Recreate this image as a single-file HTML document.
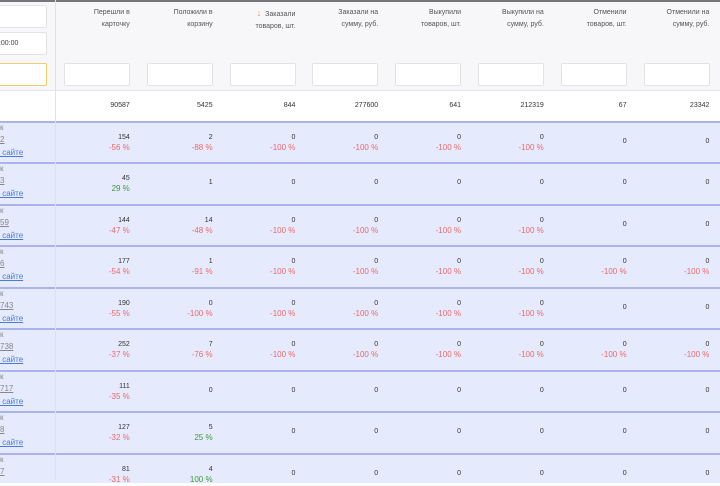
<!DOCTYPE html>
<html><head><meta charset="utf-8"><style>
*{box-sizing:border-box;margin:0;padding:0}
body{width:720px;height:480px;overflow:hidden;background:#fff;font-family:"Liberation Sans",sans-serif;font-size:7px;color:#333;position:relative}
.top{position:absolute;left:0;top:0;width:720px;height:2px;background:#777}
.head{position:absolute;left:0;top:2px;width:720px;height:88px;background:#f7f7f9}
.vd{position:absolute;left:55px;top:0;width:1px;height:480px;background:#e2e2e6}
.inp{position:absolute;background:#fff;border:1px solid #e3e3e6;border-radius:2px}
.ht{position:absolute;top:7px;text-align:right;line-height:12px;color:#555;font-size:7px;width:80px}
.tot{position:absolute;top:90px;left:0;width:720px;height:31px;background:#fff;border-top:1px solid #e6e6ea}
.row{position:absolute;left:0;width:720px;background:#e6eafd;border-top:2px solid #a9b5ea}
.c{position:absolute;text-align:right;width:80px;line-height:10px;font-size:7px;color:#333}
.r{color:#ea6a6a;font-size:8px}
.g{color:#3a9a3a;font-size:8px}
.lt{position:absolute;left:0;font-size:8px;color:#888;line-height:12px}
.lt u{color:#888}
.lk{color:#4a7ad8;text-decoration:underline}
</style></head><body>
<div class="top"></div>
<div class="head"></div>
<div class="inp" style="left:-4px;top:5px;width:51px;height:23px"></div>
<div class="inp" style="left:-4px;top:32px;width:51px;height:23px;font-size:7px;padding:7px 0 0 0;color:#444">&nbsp;:00:00</div>
<div class="inp" style="left:-4px;top:63px;width:51px;height:23px;border-color:#f0cf6a"></div>
<div class="tot"></div>
<div id="g"></div>
<div class="vd"></div>
<script>
var hdr=[["Перешли в","карточку"],["Положили в","корзину"],["Заказали","товаров, шт."],["Заказали на","сумму, руб."],["Выкупили","товаров, шт."],["Выкупили на","сумму, руб."],["Отменили","товаров, шт."],["Отменили на","сумму, руб."]];
var tot=["90587","5425","844","277600","641","212319","67","23342"];
var lbl=["2","3","59","6","743","738","717","8","7"];
var D=[
[["154","-56 %"],["2","-88 %"],["0","-100 %"],["0","-100 %"],["0","-100 %"],["0","-100 %"],["0"],["0"]],
[["45","29 %","g"],["1"],["0"],["0"],["0"],["0"],["0"],["0"]],
[["144","-47 %"],["14","-48 %"],["0","-100 %"],["0","-100 %"],["0","-100 %"],["0","-100 %"],["0"],["0"]],
[["177","-54 %"],["1","-91 %"],["0","-100 %"],["0","-100 %"],["0","-100 %"],["0","-100 %"],["0","-100 %"],["0","-100 %"]],
[["190","-55 %"],["0","-100 %"],["0","-100 %"],["0","-100 %"],["0","-100 %"],["0","-100 %"],["0"],["0"]],
[["252","-37 %"],["7","-76 %"],["0","-100 %"],["0","-100 %"],["0","-100 %"],["0","-100 %"],["0","-100 %"],["0","-100 %"]],
[["111","-35 %"],["0"],["0"],["0"],["0"],["0"],["0"],["0"]],
[["127","-32 %"],["5","25 %","g"],["0"],["0"],["0"],["0"],["0"],["0"]],
[["81","-31 %"],["4","100 %","g"],["0"],["0"],["0"],["0"],["0"],["0"]]];
var h="",W=82.8;
for(var i=0;i<8;i++){var x=55+i*W,re=x+W-8;
h+='<div class="ht" style="left:'+(re-80)+'px">'+(i==2?'<span style="color:#f08a5a;font-size:9px">&#8595;</span>&nbsp;&nbsp;':'')+hdr[i][0]+'<br>'+hdr[i][1]+'</div>';
h+='<div class="inp" style="left:'+(x+9)+'px;top:63px;width:66px;height:23px"></div>';
h+='<div class="c" style="left:'+(re-80)+'px;top:101px">'+tot[i]+'</div>';}
var ys=[121,162,204,245,287,328,370,411,453];
for(var r=0;r<9;r++){var y=ys[r];h+='<div class="row" style="top:'+y+'px;height:'+(r<8?ys[r+1]-y:30)+'px"></div>';
h+='<div class="lt" style="top:'+(y+1)+'px">к</div><div class="lt" style="top:'+(y+13)+'px"><u>'+lbl[r]+'</u></div>';
if(r<8)h+='<div class="lt lk" style="top:'+(y+26)+'px">&nbsp;сайте</div>';
for(var i=0;i<8;i++){var re=55+i*W+W-8,d=D[r][i];
if(d.length>1)h+='<div class="c" style="left:'+(re-80)+'px;top:'+(y+12)+'px">'+d[0]+'<br><span class="'+(d[2]||'r')+'">'+d[1]+'</span></div>';
else h+='<div class="c" style="left:'+(re-80)+'px;top:'+(y+16)+'px">'+d[0]+'</div>';}}
document.getElementById('g').innerHTML=h;
</script>
</body></html>
